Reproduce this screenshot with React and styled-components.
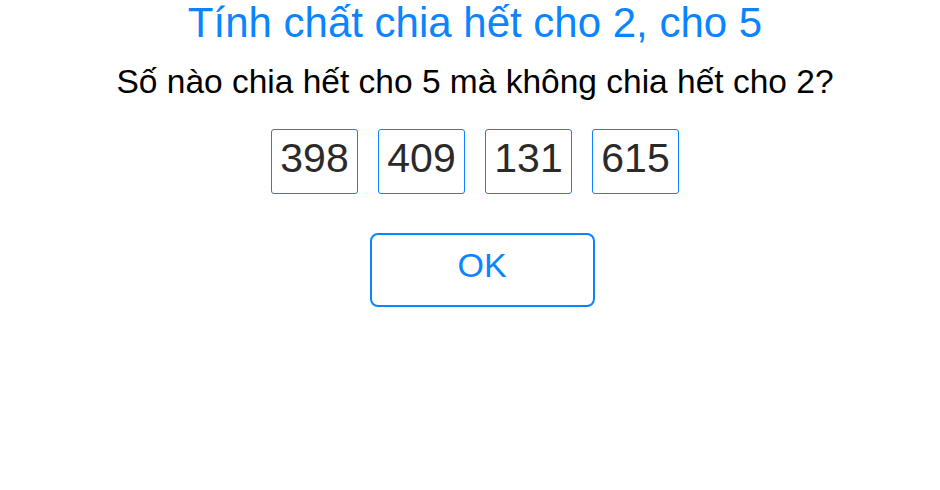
import React from "react";
import styled, { createGlobalStyle } from "styled-components";

const GlobalStyle = createGlobalStyle`
  body {
    margin: 0;
    background: #ffffff;
    font-family: "Liberation Sans", Arial, sans-serif;
  }
`;

const Page = styled.div`
  display: flex;
  flex-direction: column;
  align-items: center;
  box-sizing: border-box;
  width: 940px;
  height: 490px;
  padding-left: 10px;
`;

const Title = styled.h1`
  margin: 0;
  font-size: 42px;
  font-weight: normal;
  line-height: 46px;
  color: #0a84ff;
`;

const Question = styled.p`
  margin: 15px 0 0;
  font-size: 33.5px;
  line-height: 42px;
  color: #000;
`;

const Choices = styled.div`
  display: flex;
  gap: 20px;
  margin-top: 26px;
`;

const Choice = styled.div`
  box-sizing: border-box;
  width: 87px;
  height: 65px;
  border: 1px solid #0a84ff;
  border-radius: 3px;
  display: flex;
  align-items: center;
  justify-content: center;
  padding-bottom: 7px;
  font-size: 41px;
  color: #2a2a2a;
`;

const OkButton = styled.button`
  box-sizing: border-box;
  margin: 39px 0 0 14px;
  width: 225px;
  height: 74px;
  border: 2px solid #0a84ff;
  border-radius: 8px;
  background: #fff;
  color: #0a84ff;
  font-family: inherit;
  font-size: 34px;
  padding: 0 0 9px;
`;

const numbers = [398, 409, 131, 615];

export default function App() {
  return (
    <Page>
      <GlobalStyle />
      <Title>Tính chất chia hết cho 2, cho 5</Title>
      <Question>Số nào chia hết cho 5 mà không chia hết cho 2?</Question>
      <Choices>
        {numbers.map((n) => (
          <Choice key={n}>{n}</Choice>
        ))}
      </Choices>
      <OkButton>OK</OkButton>
    </Page>
  );
}
